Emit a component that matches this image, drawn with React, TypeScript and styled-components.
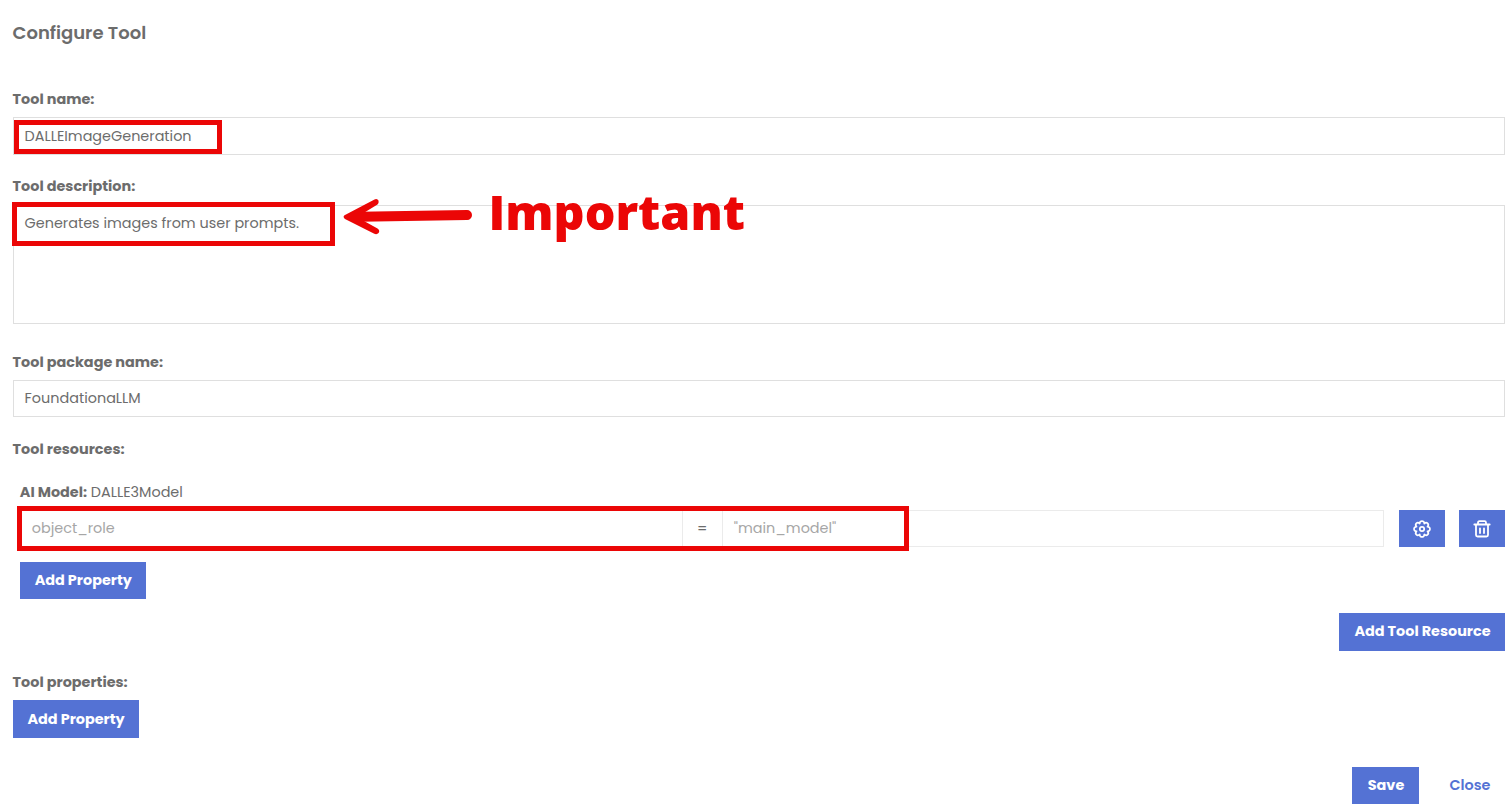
import React from "react";
import styled, { createGlobalStyle } from "styled-components";

const GlobalStyle = createGlobalStyle`
  *, *::before, *::after { box-sizing: border-box; }
  body {
    margin: 0;
    background: #fff;
    color: #6c6c6c;
    font-family: Poppins, Inter, "Liberation Sans", sans-serif;
    font-size: 14.4px;
  }
`;

const Dialog = styled.main`
  position: relative;
  width: 1512px;
  height: 812px;
  overflow: hidden;
  padding: 21px 7px 0 12.6px;
  display: flex;
  flex-direction: column;
`;

const Title = styled.h1`
  margin: 0 0 44px;
  height: 24px;
  font-size: 18px;
  line-height: 24px;
  font-weight: 600;
`;

const Field = styled.section<{ $gap: number }>`
  display: flex;
  flex-direction: column;
  align-items: stretch;
  margin-bottom: ${(p) => p.$gap}px;
`;

const Label = styled.label<{ $gap?: number }>`
  height: 20px;
  line-height: 20px;
  font-weight: 700;
  margin-bottom: ${(p) => p.$gap ?? 8}px;
`;

const Box = styled.div<{ $height: number; $top?: number }>`
  height: ${(p) => p.$height}px;
  border: 1px solid #dfdfdf;
  padding: ${(p) => p.$top ?? 7}px 11px;
  line-height: 20px;
`;

const Resource = styled.div`
  display: flex;
  flex-direction: column;
  align-items: flex-start;
  padding-left: 7.2px;
`;

const ResourceName = styled.div`
  height: 20px;
  line-height: 20px;
  margin-bottom: 8px;
  white-space: pre;
`;

const PropertyRow = styled.div`
  display: flex;
  align-self: stretch;
  height: 37px;
  margin-bottom: 15px;
`;

const Cell = styled.div<{ $width: number; $first?: boolean; $center?: boolean }>`
  width: ${(p) => p.$width}px;
  border: 1px solid #ebebeb;
  border-left-width: ${(p) => (p.$first ? 1 : 0)}px;
  padding: 0 ${(p) => (p.$center ? 0 : 11)}px;
  line-height: 34px;
  color: ${(p) => (p.$center ? "#6c6c6c" : "#a6a6a6")};
  text-align: ${(p) => (p.$center ? "center" : "left")};
`;

const Button = styled.button<{ $width: number; $height?: number; $lower?: boolean; $text?: boolean }>`
  width: ${(p) => p.$width}px;
  height: ${(p) => p.$height ?? 37}px;
  display: flex;
  align-items: center;
  justify-content: center;
  border: 0;
  padding: ${(p) => (p.$lower ? "1px 0 0 1px" : "0 0 1px 1px")};
  background: ${(p) => (p.$text ? "transparent" : "#5472d4")};
  color: ${(p) => (p.$text ? "#5472d4" : "#fff")};
  font: inherit;
  font-weight: ${(p) => (p.$text ? 600 : 700)};
  white-space: nowrap;
`;

const IconGroup = styled.div`
  display: flex;
  gap: 14px;
  margin-left: auto;
`;

const IconButton = styled(Button)`
  padding: 0;
`;

const Actions = styled.div<{ $top: number; $bottom: number }>`
  display: flex;
  justify-content: flex-end;
  gap: 15px;
  margin: ${(p) => p.$top}px 0 ${(p) => p.$bottom}px;
`;

const Highlight = styled.div<{ $x: number; $y: number; $w: number; $h: number }>`
  position: absolute;
  left: ${(p) => p.$x}px;
  top: ${(p) => p.$y}px;
  width: ${(p) => p.$w}px;
  height: ${(p) => p.$h}px;
  border: 5px solid #eb0606;
`;

const Arrow = styled.svg`
  position: absolute;
  left: 340px;
  top: 194px;
`;

const Callout = styled.strong`
  position: absolute;
  left: 488.5px;
  top: 181px;
  font: 800 48.3px/60px "Open Sans", sans-serif;
  color: #eb0606;
`;

const CogIcon = () => (
  <svg width="18" height="18" viewBox="0 0 18 18" fill="none" stroke="currentColor" strokeWidth="1.7" strokeLinejoin="round">
    <path d="M14.45 6.74C17.8 6.6 17.8 11.4 14.45 11.26C16.7 13.8 13.8 16.7 11.26 14.45C11.4 17.8 6.6 17.8 6.74 14.45C4.2 16.7 1.3 13.8 3.55 11.26C.2 11.4 .2 6.6 3.55 6.74C1.3 4.2 4.2 1.3 6.74 3.55C6.6 .2 11.4 .2 11.26 3.55C13.8 1.3 16.7 4.2 14.45 6.74Z" />
    <circle cx="9" cy="9" r="2.2" />
  </svg>
);

const TrashIcon = () => (
  <svg width="18" height="18" viewBox="0 0 18 18" fill="none" stroke="currentColor" strokeWidth="1.8" strokeLinecap="round" strokeLinejoin="round">
    <path d="M1.3 4.5H16.7M5 4.5V2.7Q5 1.2 6.4 1.2H11.6Q13 1.2 13 2.7V4.5M3 4.5V15Q3 16.5 4.6 16.5H13.4Q15 16.5 15 15V4.5M7 8.3V13M11 8.3V13" />
  </svg>
);

export default function App() {
  return (
    <>
      <GlobalStyle />
      <Dialog>
        <Title>Configure Tool</Title>
        <Field $gap={21}>
          <Label>Tool name:</Label>
          <Box $height={38} $top={8}>DALLEImageGeneration</Box>
        </Field>
        <Field $gap={28}>
          <Label $gap={9}>Tool description:</Label>
          <Box $height={119}>Generates images from user prompts.</Box>
        </Field>
        <Field $gap={22}>
          <Label>Tool package name:</Label>
          <Box $height={37}>FoundationaLLM</Box>
        </Field>
        <Label $gap={23}>Tool resources:</Label>
        <Resource>
          <ResourceName><b>AI Model:</b> DALLE3Model</ResourceName>
          <PropertyRow>
            <Cell $width={663} $first>object_role</Cell>
            <Cell $width={40} $center>=</Cell>
            <Cell $width={661}>"main_model"</Cell>
            <IconGroup>
              <IconButton $width={46} title="Edit"><CogIcon /></IconButton>
              <IconButton $width={46} title="Delete"><TrashIcon /></IconButton>
            </IconGroup>
          </PropertyRow>
          <Button $width={126}>Add Property</Button>
        </Resource>
        <Actions $top={14} $bottom={21}>
          <Button $width={166} $height={38}>Add Tool Resource</Button>
        </Actions>
        <Label>Tool properties:</Label>
        <Button $width={126} $height={38} $lower>Add Property</Button>
        <Actions $top={29} $bottom={0}>
          <Button $width={67}>Save</Button>
          <Button $width={71} $text>Close</Button>
        </Actions>

        <Highlight $x={14} $y={120} $w={208} $h={34} />
        <Highlight $x={12} $y={202} $w={323} $h={44} />
        <Highlight $x={17} $y={506} $w={892} $h={45} />
        <Arrow width="136" height="46" viewBox="0 0 136 46">
          <path d="M20 22.8L127 21" stroke="#eb0606" strokeWidth="10" strokeLinecap="round" />
          <path d="M4.5 21.3L34.5 5.4Q37.5 4.4 38.6 6.8Q39 9 37.5 10.4L24 18.8V27L37.5 34.5Q40.3 36.5 38.6 39Q36.8 41 33.8 39.5L5 25Q2.5 22.8 4.5 21.3Z" fill="#eb0606" />
        </Arrow>
        <Callout>Important</Callout>
      </Dialog>
    </>
  );
}
